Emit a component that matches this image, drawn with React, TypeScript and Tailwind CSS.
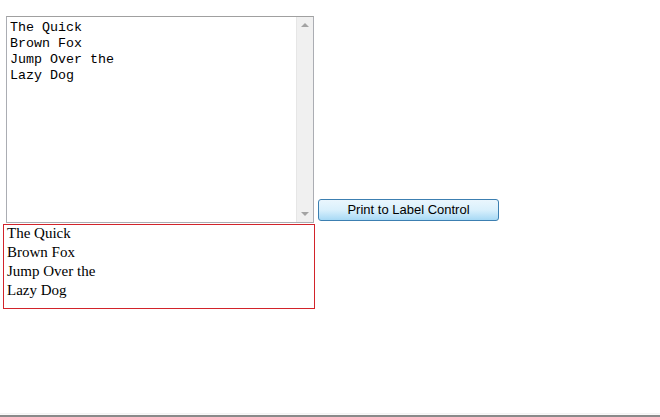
export default function App() {
  const lines = ["The Quick", "Brown Fox", "Jump Over the", "Lazy Dog"];

  return (
    <div className="h-[417px] w-full bg-white flex flex-col overflow-hidden">
      <div className="flex items-end pt-[16px] pl-[6px]">
        {/* textarea look-alike */}
        <div className="w-[308px] h-[207px] border border-[#abadb3] border-t-[#a0a0a0] flex bg-white">
          <div className="flex-1 pl-[3px] pt-[3px] font-['Courier_New','Liberation_Mono',monospace] text-[13.33px] leading-[16px] text-black">
            {lines.map((l) => (
              <div key={l}>{l}</div>
            ))}
          </div>
          {/* scrollbar */}
          <div className="w-[17px] h-full bg-[#f0f0f0] border-l border-[#e6e6e6] flex flex-col items-center justify-between py-[6px]">
            <div className="w-0 h-0 border-l-[4px] border-r-[4px] border-b-[4px] border-l-transparent border-r-transparent border-b-[#a3a3a3]" />
            <div className="w-0 h-0 border-l-[4px] border-r-[4px] border-t-[4px] border-l-transparent border-r-transparent border-t-[#a3a3a3]" />
          </div>
        </div>
        <button className="ml-[4px] mb-[2px] w-[181px] h-[22px] rounded-[3px] border border-[#3c7fb1] bg-gradient-to-b from-[#eaf6fd] via-[#d9f0fc] to-[#a7d9f5] font-['Arial','Liberation_Sans',sans-serif] text-[13px] leading-[20px] text-black">
          Print to Label Control
        </button>
      </div>

      {/* label output */}
      <div className="ml-[3px] mt-[1px] w-[312px] h-[85px] border border-[#d2232a] pl-[3px] font-['Times_New_Roman','Liberation_Serif',serif] text-[15px] leading-[19px] text-black">
        <div className="-mt-[1px]">
          {lines.map((l) => (
            <div key={l}>{l}</div>
          ))}
        </div>
      </div>

      <div className="flex-1" />
      <div className="h-px bg-[#f4f4f4]" />
      <div className="h-px bg-[#fafafa]" />
      <div className="h-[2px] bg-[#8a8a8a]" />
    </div>
  );
}
